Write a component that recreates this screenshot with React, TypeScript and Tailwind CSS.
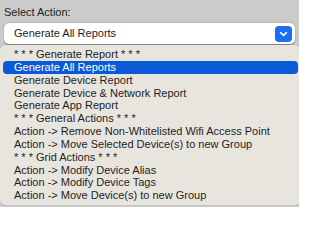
import React from 'react'

const options = [
  '* * * Generate Report * * *',
  'Generate All Reports',
  'Generate Device Report',
  'Generate Device & Network Report',
  'Generate App Report',
  '* * * General Actions * * *',
  'Action -> Remove Non-Whitelisted Wifi Access Point',
  'Action -> Move Selected Device(s) to new Group',
  '* * * Grid Actions * * *',
  'Action -> Modify Device Alias',
  'Action -> Modify Device Tags',
  'Action -> Move Device(s) to new Group',
]

export default function App() {
  const selected = 'Generate All Reports'

  return (
    <div className="relative w-[299px] h-[207px] overflow-hidden bg-[#cbcbcb] font-['Liberation_Sans',Arial,sans-serif] text-[11px] text-[#1e1e1e]">
      {/* Label */}
      <div className="pl-[4px] pt-[6px] leading-[13px]">Select Action:</div>

      {/* Select box */}
      <div className="mt-[4px] ml-[4px] w-[291px] h-[21px] flex items-center justify-between rounded-[5px] bg-white pl-[10px] pr-[3px] shadow-[0_0.5px_1.5px_rgba(0,0,0,0.4)]">
        <span>{selected}</span>
        <span className="w-[17px] h-[16px] rounded-[4px] bg-[#1b6ef2] flex items-center justify-center">
          <svg width="17" height="16" viewBox="0 0 17 16">
            <path d="M5.6 6.6 L8.5 9.4 L11.4 6.6" fill="none" stroke="white" strokeWidth="1.6" strokeLinecap="round" strokeLinejoin="round" />
          </svg>
        </span>
      </div>

      {/* Open dropdown list */}
      <div className="absolute left-0 top-[45px] w-[300px] h-[160px] rounded-[5px] bg-[#e8e5df] pt-[3px] shadow-[0_0_1px_rgba(0,0,0,0.35)]">
        {options.map((opt) => (
          <div
            key={opt}
            className={
              opt === selected
                ? 'ml-[3px] mr-[2px] pl-[11px] leading-[12.85px] rounded-[4px] bg-[#0a5ad8] text-white'
                : 'ml-[3px] mr-[2px] pl-[11px] leading-[12.85px]'
            }
          >
            {opt}
          </div>
        ))}
      </div>
    </div>
  )
}
